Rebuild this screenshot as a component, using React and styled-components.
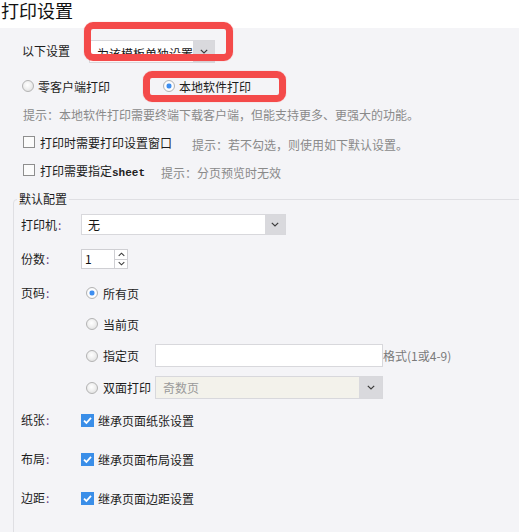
import React from 'react';
import styled, { createGlobalStyle } from 'styled-components';

const GlobalStyle = createGlobalStyle`
  html, body {
    margin: 0;
    padding: 0;
  }
  body {
    background: #f4f4f7;
    font-family: "Noto Sans CJK SC", "Noto Sans", sans-serif;
    font-size: 12px;
    color: #1c1c1c;
    overflow: hidden;
  }
`;

const Page = styled.div`
  width: 519px;
  height: 532px;
  overflow: hidden;
  background: #f4f4f7;
`;

const Header = styled.header`
  height: 28px;
  background: #fff;
  font-size: 18px;
  line-height: 21px;
  padding-left: 1px;
  color: #111;
`;

const Top = styled.section`
  padding: 12px 0 0 22px;
`;

const Line = styled.div`
  display: flex;
  align-items: center;
  height: ${({ $h }) => $h}px;
  margin-top: ${({ $mt }) => $mt || 0}px;
  gap: ${({ $gap }) => $gap || 0}px;
  padding-left: ${({ $pl }) => $pl || 0}px;
`;

const SettingLabel = styled.span`
  width: 67px;
  padding-bottom: 3px;
`;

const Anchor = styled.div`
  position: relative;
  display: flex;
  align-items: center;
`;

const Marker = styled.div`
  position: absolute;
  left: ${({ $l }) => $l}px;
  top: ${({ $t }) => $t}px;
  width: ${({ $w }) => $w}px;
  height: ${({ $h }) => $h}px;
  box-sizing: border-box;
  border: 7px solid #f44a4a;
  border-radius: 9px;
  box-shadow: 0 0 1px rgba(244, 74, 74, 0.6);
  pointer-events: none;
`;

const Select = styled.div`
  display: flex;
  box-sizing: border-box;
  width: ${({ $w }) => $w}px;
  height: ${({ $h }) => $h}px;
  border: 1px solid #d8d8dc;
  background: ${({ $disabled }) => ($disabled ? '#f3f2eb' : '#fff')};
`;

const SelectValue = styled.span`
  flex: 1;
  display: flex;
  align-items: center;
  padding-left: ${({ $pad }) => $pad}px;
  padding-top: ${({ $drop }) => $drop || 0}px;
  color: ${({ $muted }) => ($muted ? '#9a9a9a' : '#151515')};
  white-space: nowrap;
  overflow: hidden;
`;

const SelectButton = styled.span`
  width: ${({ $w }) => $w}px;
  display: flex;
  align-items: center;
  justify-content: center;
  background: #d9d9dd;
`;

const Option = styled.label`
  display: inline-flex;
  align-items: center;
  gap: ${({ $gap }) => $gap || 4}px;
  white-space: nowrap;
`;

const Radio = styled.span`
  box-sizing: border-box;
  width: 12px;
  height: 12px;
  border-radius: 50%;
  border: 1px solid #b3b3b3;
  background: ${({ $checked }) =>
    $checked
      ? 'radial-gradient(circle, #3d8ef0 0 2.4px, #cfe2fb 2.6px, #fff 3.6px, #ececec 100%)'
      : 'radial-gradient(circle at 45% 40%, #ffffff 0%, #f0f0f0 45%, #d9d9d9 100%)'};
  flex: none;
`;

const Box = styled.span`
  box-sizing: border-box;
  width: ${({ $checked }) => ($checked ? 13 : 12)}px;
  height: ${({ $checked }) => ($checked ? 13 : 12)}px;
  border: ${({ $checked }) => ($checked ? 'none' : '1px solid #8e8e8e')};
  background: ${({ $checked }) => ($checked ? '#3a8ee8' : '#fbfbfb')};
  display: flex;
  align-items: center;
  justify-content: center;
  flex: none;
`;

const Hint = styled.span`
  color: #8a8a8a;
  margin-top: ${({ $mt }) => $mt || 0}px;
  white-space: nowrap;
`;

const HintLine = styled.div`
  color: #8a8a8a;
  height: 18px;
  line-height: 18px;
  margin-top: 12px;
  padding-left: 1px;
  white-space: nowrap;
`;

const Mono = styled.span`
  font-family: "Liberation Mono", "DejaVu Sans Mono", monospace;
  font-size: 11px;
  font-weight: bold;
  color: #222;
`;

const Fieldset = styled.fieldset`
  margin: 12px 0 0 13px;
  padding: 0 0 0 3px;
  width: 600px;
  border: 1px solid #dfdfe3;
  border-radius: 4px;
  min-height: 400px;
`;

const Legend = styled.legend`
  padding: 0 2px;
  line-height: 18px;
  font-size: 12px;
  color: #1c1c1c;
`;

const Body = styled.div`
  padding: 6px 0 0 4px;
`;

const Row = styled.div`
  display: flex;
  align-items: ${({ $top }) => ($top ? 'flex-start' : 'center')};
  min-height: ${({ $h }) => $h || 20}px;
  margin-top: ${({ $mt }) => $mt || 0}px;
`;

const Label = styled.span`
  width: 60px;
  flex: none;
  line-height: ${({ $lh }) => $lh || 20}px;
`;

const Colon = styled.span`
  color: #6d3f84;
  margin-left: 1px;
`;

const Options = styled.div`
  display: flex;
  flex-direction: column;
  gap: 9px;
  padding-left: 5px;
`;

const OptionRow = styled.div`
  display: flex;
  align-items: center;
  height: ${({ $h }) => $h || 22}px;
`;

const OptionText = styled.span`
  width: 52px;
  flex: none;
  white-space: nowrap;
`;

const TextInput = styled.div`
  box-sizing: border-box;
  width: 228px;
  height: 23px;
  border: 1px solid #d8d8dc;
  background: #fff;
`;

const Format = styled.span`
  color: #7a7a7a;
  white-space: nowrap;
`;

const Spinner = styled.div`
  display: flex;
  box-sizing: border-box;
  width: 47px;
  height: 20px;
`;

const SpinField = styled.div`
  box-sizing: border-box;
  width: 34px;
  border: 1px solid #cfcfd3;
  background: #fff;
  padding-left: 3px;
  line-height: 18px;
  color: #111;
`;

const SpinButtons = styled.div`
  display: flex;
  flex-direction: column;
  width: 13px;
`;

const SpinButton = styled.div`
  flex: 1;
  box-sizing: border-box;
  border: 1px solid #cfcfd3;
  border-left: none;
  ${({ $down }) => ($down ? 'border-top: none;' : '')}
  background: #fff;
  display: flex;
  align-items: center;
  justify-content: center;
`;

const Chevron = ({ up = false, w = 8, color = '#3c3c3c' }) => (
  <svg width={w} height={5} viewBox="0 0 8 5" fill="none">
    <path
      d={up ? 'M0.8 4.2 L4 1 L7.2 4.2' : 'M0.8 0.8 L4 4 L7.2 0.8'}
      stroke={color}
      strokeWidth="1.2"
    />
  </svg>
);

const Check = () => (
  <svg width="11" height="11" viewBox="0 0 11 11" fill="none">
    <path d="M2 5.6 L4.4 8 L9 2.8" stroke="#fff" strokeWidth="1.8" />
  </svg>
);

const FieldLabel = ({ children, lh }) => (
  <Label $lh={lh}>
    {children}
    <Colon>:</Colon>
  </Label>
);

const InheritRow = ({ label, text, mt }) => (
  <Row $mt={mt}>
    <FieldLabel>{label}</FieldLabel>
    <Option>
      <Box $checked>
        <Check />
      </Box>
      {text}
    </Option>
  </Row>
);

export default function App() {
  return (
    <Page>
      <GlobalStyle />
      <Header>打印设置</Header>

      <Top>
        <Line $h={23}>
          <SettingLabel>以下设置</SettingLabel>
          <Anchor>
            <Select $w={126} $h={23}>
              <SelectValue $pad={7} $drop={3}>为该模板单独设置</SelectValue>
              <SelectButton $w={21}>
                <Chevron />
              </SelectButton>
            </Select>
            <Marker $l={-5} $t={-18} $w={149} $h={39} />
          </Anchor>
        </Line>

        <Line $h={16} $mt={15} $gap={53}>
          <Option>
            <Radio />
            零客户端打印
          </Option>
          <Anchor>
            <Option>
              <Radio $checked />
              本地软件打印
            </Option>
            <Marker $l={-20} $t={-7} $w={143} $h={31} />
          </Anchor>
        </Line>

        <HintLine>提示：本地软件打印需要终端下载客户端，但能支持更多、更强大的功能。</HintLine>

        <Line $h={16} $mt={10} $gap={20} $pl={1}>
          <Option $gap={5}>
            <Box />
            打印时需要打印设置窗口
          </Option>
          <Hint $mt={5}>提示：若不勾选，则使用如下默认设置。</Hint>
        </Line>

        <Line $h={16} $mt={12} $gap={16} $pl={1}>
          <Option $gap={5}>
            <Box />
            <span>
              打印需要指定<Mono>sheet</Mono>
            </span>
          </Option>
          <Hint $mt={4}>提示：分页预览时无效</Hint>
        </Line>
      </Top>

      <Fieldset>
        <Legend>默认配置</Legend>
        <Body>
          <Row $h={21}>
            <FieldLabel>打印机</FieldLabel>
            <Select $w={205} $h={21}>
              <SelectValue $pad={6}>无</SelectValue>
              <SelectButton $w={20}>
                <Chevron />
              </SelectButton>
            </Select>
          </Row>

          <Row $mt={14}>
            <FieldLabel>份数</FieldLabel>
            <Spinner>
              <SpinField>1</SpinField>
              <SpinButtons>
                <SpinButton>
                  <Chevron up w={7} />
                </SpinButton>
                <SpinButton $down>
                  <Chevron w={7} />
                </SpinButton>
              </SpinButtons>
            </Spinner>
          </Row>

          <Row $top $mt={13}>
            <FieldLabel lh={22}>页码</FieldLabel>
            <Options>
              <OptionRow>
                <Option $gap={5}>
                  <Radio $checked />
                  <OptionText>所有页</OptionText>
                </Option>
              </OptionRow>
              <OptionRow>
                <Option $gap={5}>
                  <Radio />
                  <OptionText>当前页</OptionText>
                </Option>
              </OptionRow>
              <OptionRow $h={23}>
                <Option $gap={5}>
                  <Radio />
                  <OptionText>指定页</OptionText>
                </Option>
                <TextInput />
                <Format>格式(1或4-9)</Format>
              </OptionRow>
              <OptionRow $h={23}>
                <Option $gap={5}>
                  <Radio />
                  <OptionText>双面打印</OptionText>
                </Option>
                <Select $w={228} $h={23} $disabled>
                  <SelectValue $pad={7} $muted>
                    奇数页
                  </SelectValue>
                  <SelectButton $w={23}>
                    <Chevron />
                  </SelectButton>
                </Select>
              </OptionRow>
            </Options>
          </Row>

          <InheritRow mt={11} label="纸张" text="继承页面纸张设置" />
          <InheritRow mt={19} label="布局" text="继承页面布局设置" />
          <InheritRow mt={19} label="边距" text="继承页面边距设置" />
        </Body>
      </Fieldset>
    </Page>
  );
}
